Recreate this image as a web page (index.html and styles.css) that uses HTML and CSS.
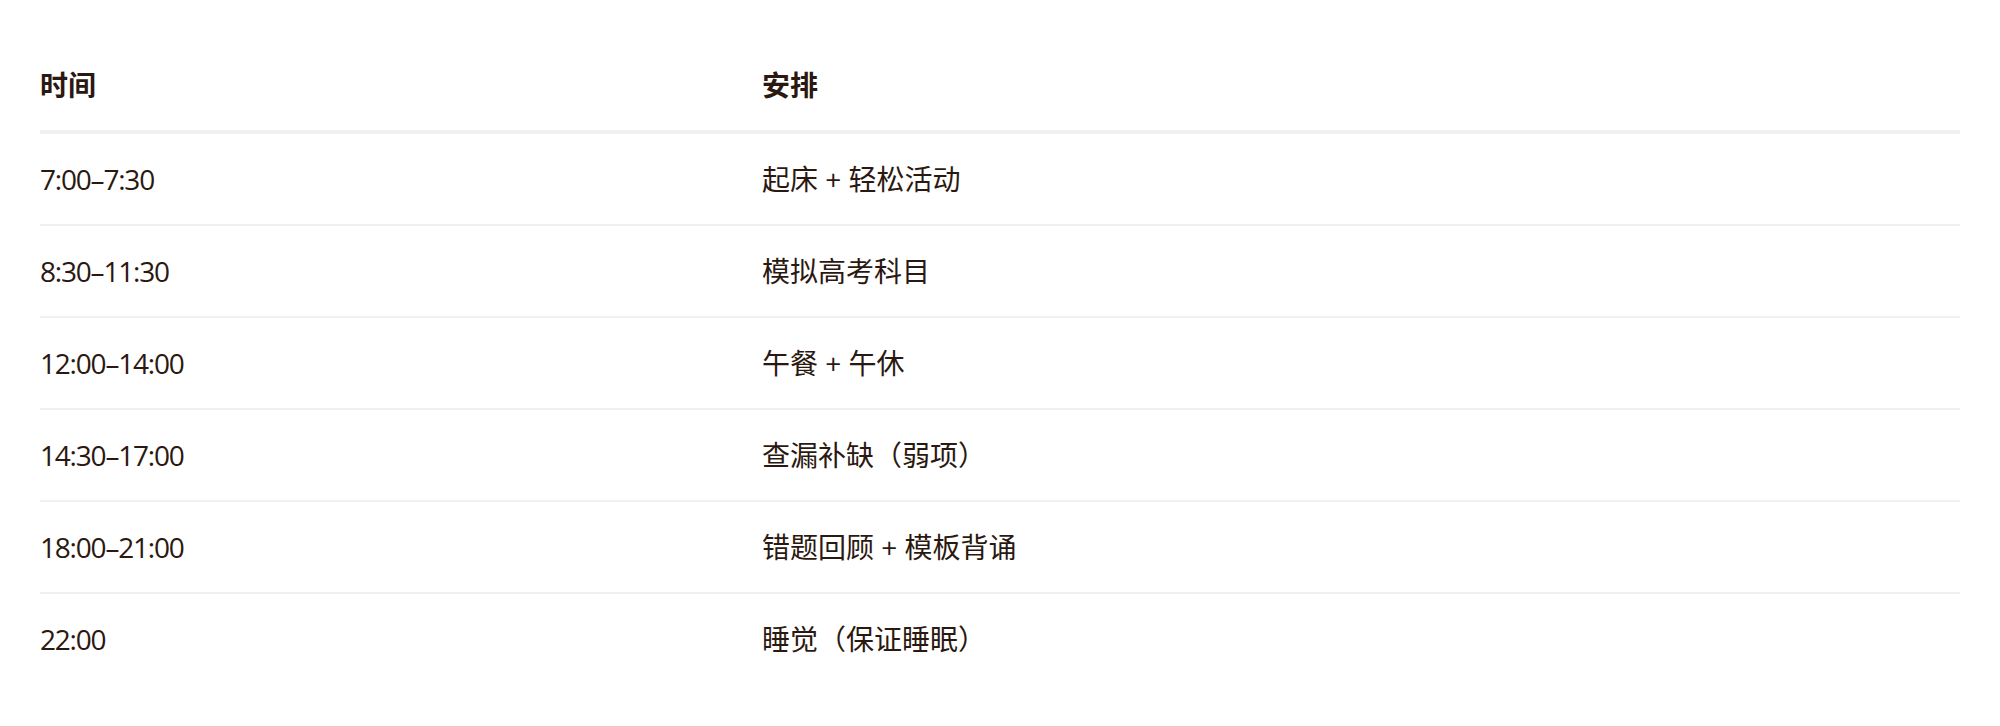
FILE: index.html
```html
<!DOCTYPE html>
<html lang="zh-CN">
<head>
<meta charset="utf-8">
<title>安排</title>
<link rel="stylesheet" href="styles.css">
</head>
<body>
<table class="schedule">
  <thead>
    <tr><th class="col-time">时间</th><th>安排</th></tr>
  </thead>
  <tbody>
    <tr><td class="time">7:00–7:30</td><td>起床 + 轻松活动</td></tr>
    <tr><td class="time">8:30–11:30</td><td>模拟高考科目</td></tr>
    <tr><td class="time">12:00–14:00</td><td>午餐 + 午休</td></tr>
    <tr><td class="time">14:30–17:00</td><td>查漏补缺（弱项）</td></tr>
    <tr><td class="time">18:00–21:00</td><td>错题回顾 + 模板背诵</td></tr>
    <tr><td class="time">22:00</td><td>睡觉（保证睡眠）</td></tr>
  </tbody>
</table>
</body>
</html>
```
FILE: styles.css
```css
html, body {
  margin: 0;
  padding: 0;
  background: #ffffff;
}
body {
  padding: 40px;
  font-family: "Open Sans", "Noto Sans CJK SC", sans-serif;
  color: #2b1810;
}
.schedule {
  width: 100%;
  border-collapse: collapse;
  font-size: 28px;
  line-height: 42px;
}
.schedule th,
.schedule td {
  text-align: left;
  padding: 24px 0;
  vertical-align: middle;
}
.schedule th {
  font-weight: 700;
  border-bottom: 4px solid #f0f0f0;
}
.col-time {
  width: 722px;
}
.schedule td {
  font-weight: 400;
  border-bottom: 2px solid #f0f0f0;
}
.schedule td.time {
  letter-spacing: -1.2px;
}
.schedule tbody tr:last-child td {
  border-bottom: none;
}
```
